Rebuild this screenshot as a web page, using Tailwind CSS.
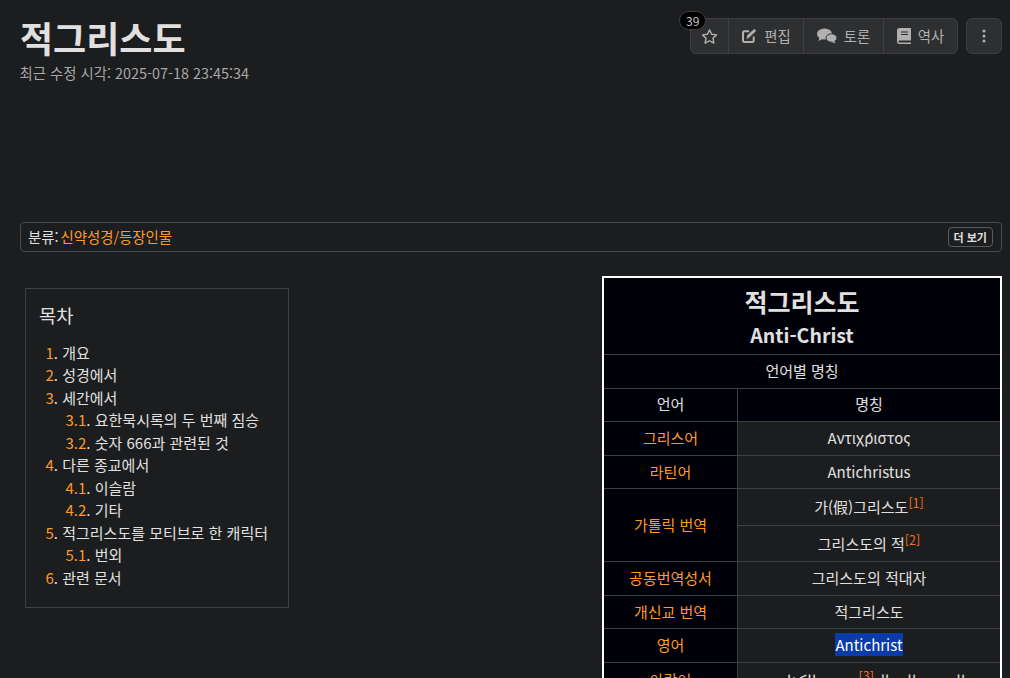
<!DOCTYPE html>
<html lang="ko">
<head>
    <meta charset="UTF-8">
    <title>적그리스도</title>
    <script src="https://cdn.jsdelivr.net/npm/@tailwindcss/browser@4"></script>
</head>
<body class="h-[678px] overflow-hidden bg-[#1c1d1f] text-[#e0e0e0] font-['Noto_Sans_CJK_KR','Noto_Sans',sans-serif] text-[15px]">
    <div class="pl-5 pr-2 pt-3.5">
        <!-- header -->
        <div class="flex justify-between items-start h-[208px]">
            <div>
                <h1 class="text-[36px] font-bold leading-[46px] text-[#e0e0e0]">적그리스도</h1>
                <p class="text-[14.4px] leading-5 mt-[3px] -ml-[0.5px] text-[#a8a8a8]">최근 수정 시각: 2025-07-18 23:45:34</p>
            </div>
            <div class="flex gap-2 mt-1 text-[14.4px] text-[#b0b0b0]">
                <div class="relative flex h-9 rounded-md border border-[#3f3f42] bg-[#2d2f31]">
                    <span class="absolute -left-[12px] -top-[8px] h-[19px] px-[6px] rounded-full bg-black border border-[#3f3f42] text-[12px] leading-[17px] text-[#c8c8c8]">39</span>
                    <a class="w-[38px] flex items-center justify-center border-r border-[#3f3f42]">
                        <svg width="17" height="17" viewBox="0 0 24 24" fill="none" stroke="#b0b0b0" stroke-width="2" stroke-linejoin="round"><path d="M12 2.500l3 6.300 6.900.9-5 4.800 1.300 6.900-6.200-3.400-6.200 3.400 1.300-6.900-5-4.800 6.900-.9z"/></svg>
                    </a>
                    <a class="w-[75px] flex items-center justify-center gap-[7px] border-r border-[#3f3f42]">
                        <svg width="16" height="16" viewBox="0 0 24 24" fill="none" stroke="#b0b0b0" stroke-width="3" stroke-linecap="round"><path d="M19 14v5a2 2 0 0 1-2 2H5a2 2 0 0 1-2-2V7a2 2 0 0 1 2-2h6"/><path d="M9 15l1-4L20 2l2 2.500-10 9.500z" fill="#b0b0b0" stroke-width="1.200"/></svg>
                        <span>편집</span>
                    </a>
                    <a class="w-[80px] flex items-center justify-center gap-[7px] border-r border-[#3f3f42]">
                        <svg width="20" height="16" viewBox="0 0 20 16" fill="#b0b0b0"><ellipse cx="7.500" cy="6" rx="7.500" ry="5.500"/><path d="M2.500 9.500L1.500 13l4-2z"/><ellipse cx="14.500" cy="10" rx="5.500" ry="4.200" stroke="#2d2f31"/><path d="M17 12.500l1.500 3-4-1.500z"/></svg>
                        <span>토론</span>
                    </a>
                    <a class="w-[73px] flex items-center justify-center gap-[7px]">
                        <svg width="14" height="16" viewBox="0 0 14 16"><path d="M2.500 0H14v12.500H2.500a1 1 0 0 0 0 2H14V16H2.500A2.500 2.500 0 0 1 0 13.500v-11A2.500 2.500 0 0 1 2.500 0z" fill="#b0b0b0"/><path d="M4 4h7M4 6.500h7" stroke="#2d2f31" stroke-width="1.200"/></svg>
                        <span>역사</span>
                    </a>
                </div>
                <a class="w-9 h-9 flex items-center justify-center rounded-md border border-[#3f3f42] bg-[#2d2f31]">
                    <svg width="4" height="14" viewBox="0 0 4 14" fill="#b0b0b0"><circle cx="2" cy="2" r="1.500"/><circle cx="2" cy="7" r="1.500"/><circle cx="2" cy="12" r="1.500"/></svg>
                </a>
            </div>
        </div>

        <!-- category -->
        <div class="flex items-center justify-between h-[30px] pl-[7px] pr-2 rounded border border-[#4a4a4d] text-[14.4px]">
            <div>분류:<a class="ml-[2px] text-[#ff9a26]">신약성경/등장인물</a></div>
            <button class="h-5 px-[5px] rounded border border-[#5a5a5d] text-[11px] font-bold leading-none text-[#e0e0e0]">더 보기</button>
        </div>

        <!-- content -->
        <div class="flex justify-between items-start mt-6">
            <div class="w-[264px] h-[320px] ml-[5px] mt-3 border border-[#3f3f42] pl-[13px] pt-3">
                <h2 class="text-[18.7px] leading-7 text-[#e0e0e0]">목차</h2>
                <ul class="mt-[12.500px] pl-[6.500px] text-[15px] leading-[22.500px]">
                    <li><a class="text-[#ff9a26]">1<span class="text-[#e0e0e0]">.</span></a> 개요</li>
                    <li><a class="text-[#ff9a26]">2<span class="text-[#e0e0e0]">.</span></a> 성경에서</li>
                    <li><a class="text-[#ff9a26]">3<span class="text-[#e0e0e0]">.</span></a> 세간에서</li>
                    <li class="pl-5"><a class="text-[#ff9a26]">3.1<span class="text-[#e0e0e0]">.</span></a> 요한묵시록의 두 번째 짐승</li>
                    <li class="pl-5"><a class="text-[#ff9a26]">3.2<span class="text-[#e0e0e0]">.</span></a> 숫자 666과 관련된 것</li>
                    <li><a class="text-[#ff9a26]">4<span class="text-[#e0e0e0]">.</span></a> 다른 종교에서</li>
                    <li class="pl-5"><a class="text-[#ff9a26]">4.1<span class="text-[#e0e0e0]">.</span></a> 이슬람</li>
                    <li class="pl-5"><a class="text-[#ff9a26]">4.2<span class="text-[#e0e0e0]">.</span></a> 기타</li>
                    <li><a class="text-[#ff9a26]">5<span class="text-[#e0e0e0]">.</span></a> 적그리스도를 모티브로 한 캐릭터</li>
                    <li class="pl-5"><a class="text-[#ff9a26]">5.1<span class="text-[#e0e0e0]">.</span></a> 번외</li>
                    <li><a class="text-[#ff9a26]">6<span class="text-[#e0e0e0]">.</span></a> 관련 문서</li>
                </ul>
            </div>

            <div class="w-[400px] border-2 border-white">
                <table class="w-full table-fixed border-collapse text-center text-[15px] text-[#e0e0e0]">
                    <colgroup><col class="w-[133.500px]"><col></colgroup>
                    <tbody class="[&_td]:border-[#3f3f42] [&_td]:border-y [&_td]:p-0">
                        <tr class="h-[76px] bg-[#000008]"><td colspan="2" class="!border-t-0 !pt-[5px] font-bold leading-[33px]"><div class="text-[25px]">적그리스도</div><div class="text-[19.500px]">Anti-Christ</div></td></tr>
                        <tr class="h-[34px] bg-[#000008]"><td colspan="2">언어별 명칭</td></tr>
                        <tr class="h-[33px] bg-[#000008]"><td class="border-r">언어</td><td>명칭</td></tr>
                        <tr class="h-[34px]"><td class="border-r bg-[#000008] text-[#ff9a26]">그리스어</td><td>Αντιχ́ριστος</td></tr>
                        <tr class="h-[33px]"><td class="border-r bg-[#000008] text-[#ff9a26] !pt-[2px]">라틴어</td><td class="!pt-[2px]">Antichristus</td></tr>
                        <tr class="h-[37px]"><td rowspan="2" class="border-r bg-[#000008] text-[#ff9a26] !pt-[2px]">가톨릭 번역</td><td class="!pt-[2px]">가(假)그리스도<sup class="top-[-0.42em] text-[#f5701a] text-[12.500px]">[1]</sup></td></tr>
                        <tr class="h-[36px]"><td class="!pt-[2px]">그리스도의 적<sup class="top-[-0.42em] text-[#f5701a] text-[12.500px]">[2]</sup></td></tr>
                        <tr class="h-[34px]"><td class="border-r bg-[#000008] text-[#ff9a26]">공동번역성서</td><td>그리스도의 적대자</td></tr>
                        <tr class="h-[33px]"><td class="border-r bg-[#000008] text-[#ff9a26] !pt-[2px]">개신교 번역</td><td class="!pt-[2px]">적그리스도</td></tr>
                        <tr class="h-[34px]"><td class="border-r bg-[#000008] text-[#ff9a26]">영어</td><td><span class="inline-block bg-[#0a3ba8] text-white leading-[23px]">Antichrist</span></td></tr>
                        <tr class="h-[37px]"><td class="border-r bg-[#000008] text-[#ff9a26]">아랍어</td><td dir="rtl">المسيح الدجال<sup class="top-[-0.42em] text-[#f5701a] text-[12.500px]">[3]</sup> مسيح الكذاب</td></tr>
                    </tbody>
                </table>
            </div>
        </div>
    </div>
</body>
</html>
